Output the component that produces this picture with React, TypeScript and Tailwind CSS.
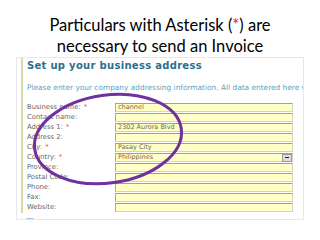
const rows: { label: string; req?: boolean; value?: string; select?: boolean }[] = [
  { label: "Business name:", req: true, value: "channel" },
  { label: "Contact name:" },
  { label: "Address 1:", req: true, value: "2302 Aurora Blvd" },
  { label: "Address 2:" },
  { label: "City:", req: true, value: "Pasay City" },
  { label: "Country:", req: true, value: "Philippines", select: true },
  { label: "Province:" },
  { label: "Postal Code:" },
  { label: "Phone:" },
  { label: "Fax:" },
  { label: "Website:" },
];

function FieldRow({ label, req, value, select }: (typeof rows)[number]) {
  return (
    <div className="flex h-[10px] items-center">
      <div className="w-[88px] shrink-0 whitespace-nowrap text-[6.8px] leading-none text-[#666]">
        {label}
        {req && <span className="ml-[3px] text-[#e0353a]">*</span>}
      </div>
      <div className="relative flex h-[9px] w-[178px] items-center border border-[#d4d4c0] border-l-[#a8a8a0] border-t-[#a0a09a] bg-[#ffffc6] pl-[2px] text-[6.5px] leading-none text-[#6a6a50]">
        {value}
        {select && (
          <div className="absolute right-0 top-0 flex h-[8px] w-[10px] items-center justify-center border border-[#9a9a9a] bg-[#dcdcdc]">
            <div className="h-[1px] w-[4px] bg-[#222]" />
          </div>
        )}
      </div>
    </div>
  );
}

export default function App() {
  return (
    <div className="relative h-[240px] w-[320px] overflow-hidden bg-white font-['DejaVu_Sans',sans-serif]">
      <h1 className="pt-[15px] text-center font-['Lato',sans-serif] text-[16.5px] font-normal leading-[21px] text-black">
        Particulars with Asterisk (<span className="text-[#e8232a]">*</span>) are
        <br />
        necessary to send an Invoice
      </h1>

      <div className="ml-[16px] h-[163px] w-[288px] overflow-hidden border border-[#e8e8e8] pl-[4px]">
        <div className="h-[155px] border-l-[2px] border-[#d6dc9e] pl-[4px]">
          <div className="flex h-[16px] items-center whitespace-nowrap text-[10px] font-bold leading-none tracking-[0.3px] text-[#2b6f8c]">
            Set up your business address
          </div>
          <div className="mt-[9px] flex h-[10px] items-center whitespace-nowrap text-[7.4px] leading-none text-[#5aa3bd]">
            Please enter your company addressing information. All data entered here will
          </div>
          <div className="mt-[9px] flex flex-col">
            {rows.map((r) => (
              <FieldRow key={r.label} {...r} />
            ))}
          </div>
        </div>
        <div className="ml-[4px] mt-[5px] h-[3px] w-[10px] rounded-t-full border-t-[2px] border-[#9fc0dc]" />
      </div>

      <svg className="pointer-events-none absolute left-0 top-0" width="320" height="240" viewBox="0 0 320 240">
        <ellipse cx="108" cy="139" rx="74" ry="44" transform="rotate(-8 108 139)" fill="none" stroke="#7030a0" strokeWidth="3" />
      </svg>
    </div>
  );
}
